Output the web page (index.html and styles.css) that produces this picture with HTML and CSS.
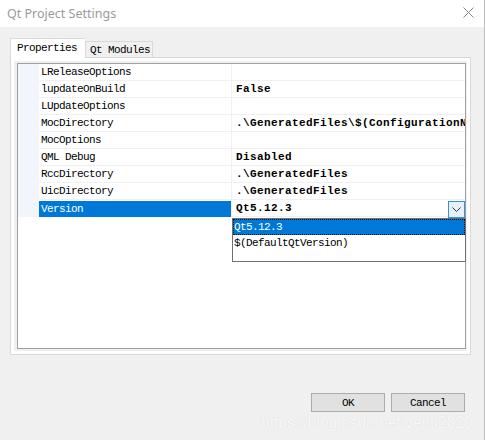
FILE: index.html
```html
<!DOCTYPE html>
<html>
<head>
<meta charset="utf-8">
<link rel="stylesheet" href="styles.css">
</head>
<body>
<div class="window">
  <div class="titlebar">
    <span class="title">Qt Project Settings</span>
    <svg class="close" width="11" height="11" viewBox="0 0 11 11"><path d="M0.5 0.5 L10.5 10.5 M10.5 0.5 L0.5 10.5" stroke="#8a8a8a" stroke-width="1" fill="none"/></svg>
  </div>
  <div class="content">
    <div class="tabs">
      <div class="tab active">Properties</div>
      <div class="tab">Qt Modules</div>
    </div>
    <div class="panel">
      <div class="frame">
        <div class="grid">
          <div class="row"><div class="gutter"></div><div class="name">LReleaseOptions</div><div class="value"></div></div>
          <div class="row"><div class="gutter"></div><div class="name">lupdateOnBuild</div><div class="value">False</div></div>
          <div class="row"><div class="gutter"></div><div class="name">LUpdateOptions</div><div class="value"></div></div>
          <div class="row"><div class="gutter"></div><div class="name">MocDirectory</div><div class="value">.\GeneratedFiles\$(ConfigurationName)</div></div>
          <div class="row"><div class="gutter"></div><div class="name">MocOptions</div><div class="value"></div></div>
          <div class="row"><div class="gutter"></div><div class="name">QML Debug</div><div class="value">Disabled</div></div>
          <div class="row"><div class="gutter"></div><div class="name">RccDirectory</div><div class="value">.\GeneratedFiles</div></div>
          <div class="row"><div class="gutter"></div><div class="name">UicDirectory</div><div class="value">.\GeneratedFiles</div></div>
          <div class="row selected"><div class="gutter"></div><div class="name">Version</div><div class="value combo">Qt5.12.3<span class="arrow"><svg width="9" height="5" viewBox="0 0 9 5"><path d="M0.5 0.5 L4.5 4.5 L8.5 0.5" stroke="#333" stroke-width="1" fill="none"/></svg></span></div></div>
          <div class="dropdown">
            <div class="item current">Qt5.12.3</div>
            <div class="item">$(DefaultQtVersion)</div>
          </div>
        </div>
      </div>
    </div>
    <div class="footer">
      <button class="btn">OK</button>
      <button class="btn">Cancel</button>
    </div>
    <div class="watermark">https://blog.csdn.net/venti2020</div>
  </div>
</div>
</body>
</html>
```

FILE: styles.css
```css
html, body {
  margin: 0;
  padding: 0;
  background: #f0f0f0;
}
.window {
  width: 485px;
  height: 440px;
  box-sizing: border-box;
  border-right: 1px solid #bdbdbd;
  background: #f0f0f0;
  position: relative;
  overflow: hidden;
  font-family: "Liberation Mono", monospace;
}
.titlebar {
  height: 27px;
  background: #ffffff;
  display: flex;
  align-items: center;
  justify-content: space-between;
  padding: 0 10px 0 7px;
}
.title {
  font-family: "Noto Sans", "Liberation Sans", sans-serif;
  font-size: 12.5px;
  color: #9a9a9a;
  margin-top: -1px;
}
.close {
  display: block;
  margin-top: -2px;
}
.content {
  padding: 11px 0 0 10px;
}
.tabs {
  display: flex;
  align-items: flex-end;
  height: 19px;
  position: relative;
  z-index: 1;
}
.tab {
  font-size: 11px;
  letter-spacing: -0.6px;
  line-height: 16px;
  box-sizing: border-box;
  border: 1px solid #d9d9d9;
  border-bottom: none;
  background: #f0f0f0;
  color: #000;
  height: 16px;
  width: 68px;
  padding-left: 4px;
}
.tab.active {
  background: #ffffff;
  height: 20px;
  width: 75px;
  padding-left: 6px;
  padding-top: 1px;
  margin-bottom: -1px;
  border-right: none;
}
.panel {
  width: 461px;
  height: 298px;
  box-sizing: border-box;
  border: 1px solid #d9d9d9;
  background: #ffffff;
  padding: 3px;
}
.frame {
  box-sizing: border-box;
  height: 100%;
  border: 3px solid #f0f0f0;
  border-right-width: 1px;
  border-top-width: 2px;
  border-bottom-width: 2px;
}
.grid {
  position: relative;
  box-sizing: border-box;
  height: 100%;
  border: 1px solid #a0a0a0;
  background: #ffffff;
}
.row {
  display: flex;
  height: 17px;
  font-size: 11px;
  line-height: 16px;
  color: #000;
}
.gutter {
  width: 21px;
  flex: none;
  background: #f2f5fb;
}
.name {
  width: 193px;
  flex: none;
  padding-left: 2px;
  box-sizing: border-box;
  border-right: 1px solid #f0f0f0;
  border-bottom: 1px solid #f0f0f0;
  letter-spacing: -0.6px;
  white-space: nowrap;
  overflow: hidden;
}
.value {
  flex: 1;
  min-width: 0;
  padding-left: 4px;
  border-bottom: 1px solid #f0f0f0;
  font-weight: bold;
  letter-spacing: 0.4px;
  white-space: nowrap;
  overflow: hidden;
  position: relative;
}
.selected .name {
  background: #0078d7;
  color: #ffffff;
  height: 16px;
  margin-top: 1px;
  border-bottom: none;
}
.combo {
  overflow: visible;
}
.arrow {
  position: absolute;
  right: 0;
  top: 1px;
  width: 15px;
  height: 15px;
  border: 1px solid #3a8ee0;
  background: #e5f1fb;
  display: flex;
  align-items: center;
  justify-content: center;
}
.dropdown {
  position: absolute;
  left: 214px;
  top: 154px;
  width: 234px;
  height: 44px;
  box-sizing: border-box;
  border: 1px solid #707070;
  background: #ffffff;
  font-size: 11px;
  letter-spacing: -0.6px;
  line-height: 16px;
  z-index: 2;
}
.item {
  height: 16px;
  padding-left: 1px;
  box-sizing: border-box;
  white-space: nowrap;
}
.item.current {
  background: #0078d7;
  color: #ffffff;
  outline: 1px dotted #111;
  outline-offset: -1px;
}
.footer {
  display: flex;
  justify-content: flex-end;
  gap: 6px;
  margin-top: 38px;
  padding-right: 19px;
}
.btn {
  width: 74px;
  height: 19px;
  box-sizing: border-box;
  border: 1px solid #adadad;
  background: #e1e1e1;
  font-family: "Liberation Mono", monospace;
  font-size: 11px;
  letter-spacing: -0.6px;
  color: #000;
  padding: 0;
  margin: 0;
}
.watermark {
  position: absolute;
  left: 261px;
  top: 414px;
  font-family: "Liberation Sans", Arial, sans-serif;
  font-size: 15.6px;
  color: #f8f8f8;
  text-shadow: 0 0 1px #d4d4d4;
  white-space: nowrap;
}
```
